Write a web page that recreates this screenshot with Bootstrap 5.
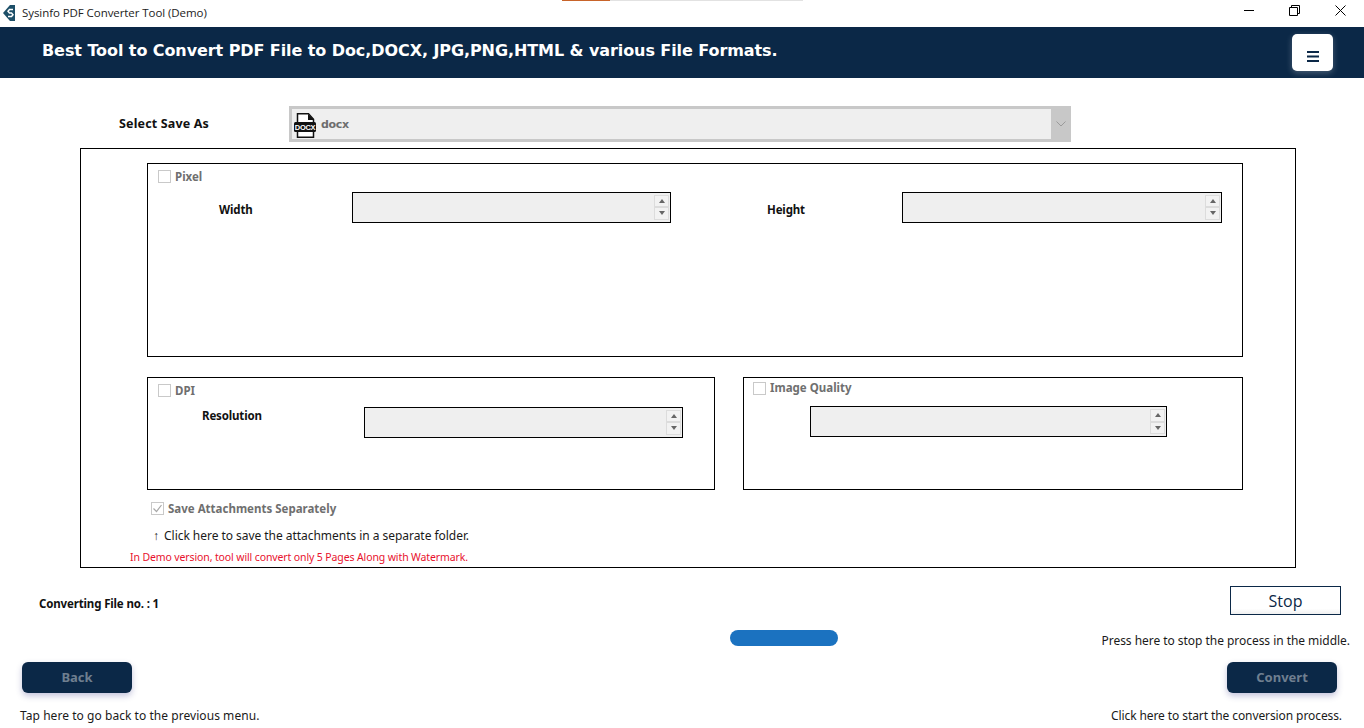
<!DOCTYPE html>
<html lang="en">
<head>
<meta charset="utf-8">
<title>Sysinfo PDF Converter Tool (Demo)</title>
<link href="https://cdn.jsdelivr.net/npm/bootstrap@5.3.0/dist/css/bootstrap.min.css" rel="stylesheet">
<style>
html,body{margin:0;height:728px;overflow:hidden;background:#fff}
body{font-family:"DejaVu Sans",sans-serif;font-size:12px;color:#000;position:relative}
.win-bar{height:27px;padding:0 0 2px 3px;gap:7px;font-family:"Open Sans",sans-serif;font-size:11.5px;color:#222;letter-spacing:-.07px}
.win-ctrls{gap:30px;padding:0 17px 4px 0;margin-left:auto}
.win-x{margin-left:5px}
.win-r{margin-left:4px}
.tab-hint{position:absolute;top:0;left:562px;height:1px;width:241px;background:linear-gradient(90deg,#c8642a 0 48px,#e2e2e2 48px)}
.head-band{height:51px;background:#0b2847;padding:0 31px 3px 42px}
.head-title{font-size:16px;font-weight:700;color:#fff;letter-spacing:-.08px}
.menu-btn{width:41px;height:37px;background:#fff;border:0;border-radius:5px;padding:0;margin-top:3px;box-shadow:0 2px 6px rgba(255,255,255,.25)}
.save-row{margin-top:28px;height:36px;padding-left:119px}
.lbl-b{font-size:11.5px;font-weight:700;color:#111;font-family:"Noto Sans",sans-serif;letter-spacing:-.15px}
.save-lbl{width:170px;font-size:12.5px;letter-spacing:.15px}
.combo{width:782px;height:36px;background:#c8c8c8;padding:3px 0 3px 3px}
.combo-in{flex:1;background:#efefef;padding:2px 0 0 2px;gap:4px;font-size:11px;font-weight:700;color:#6d6d6d;letter-spacing:-.3px}
.combo-arr{width:20px}
.outer-box{margin:6px 0 0 80px;width:1216px;height:420px;border:1px solid #000;padding:14px 0 0 66px;position:relative}
.grp{border:1px solid #000}
.grp-px{width:1096px;height:194px}
.grp-dpi{width:568px;height:113px}
.grp-q{width:500px;height:113px}
.grp-row{gap:28px;margin-top:20px}
.chk{width:13px;height:13px;border:1px solid #c9c9c9;background:#fff;flex:none}
.chk-lbl{font-size:11.500px;font-weight:700;color:#6f6f6f;gap:4px;font-family:"Noto Sans",sans-serif;line-height:1.1}
.chk-txt{padding-top:2px}
.spin{width:319px;height:31px;border:1px solid #000;background:#efefef;padding:2px 1px 2px 0;flex:none}
.spin-wide{width:320px}
.spin-short{width:357px}
.spin-btns{width:15px;margin-left:auto;gap:0}
.spin-btn{flex:1;background:#f2f2f2;border:1px solid #dcdcdc;font-size:0}
.tri-up{width:0;height:0;border:3.5px solid transparent;border-top:0;border-bottom:4px solid #666}
.tri-dn{width:0;height:0;border:3.5px solid transparent;border-bottom:0;border-top:4px solid #666}
.px-chk{padding:5px 0 0 10px}
.px-row{margin-top:8px}
.w-lbl{margin:5px 0 0 71px;width:133px}
.h-lbl{margin:5px 0 0 96px;width:135px}
.dpi-chk{padding:5px 0 0 10px}
.q-chk{padding:4px 0 0 9px}
.dpi-row{margin-top:9px;padding-left:54px}
.r-lbl{width:162px;align-self:flex-start}
.q-row{margin-top:11px;padding-left:66px}
.att-row{position:relative;margin:11px 0 0 4px}
.note{font-family:"Noto Sans",sans-serif;font-size:12px;color:#1a1a1a;letter-spacing:-.04px}
.note-att{margin:11px 0 0 6px}
.note-arr{margin-right:2px}
.note-red{font-size:10.5px;color:#e8112d;margin:5px 0 0 -17px;letter-spacing:-.12px}
.note-tap{letter-spacing:.05px}
.note-go{letter-spacing:-.09px}
.foot-a{height:29px;margin-top:18px;padding:0 23px 0 39px}
.conv-lbl{margin-top:6px}
.stop-btn{width:111px;height:29px;border:1px solid #0b2847;border-radius:0;background:linear-gradient(#fff 80%,#f0f0f0);font-family:"Open Sans",sans-serif;font-size:16px;color:#0b2847;padding:0;line-height:1}
.foot-b{height:16px;margin-top:15px;padding:0 14px 0 730px}
.press-txt{margin-top:5px}
.pill{width:108px;height:16px;border-radius:8px;background:#1b72c0}
.foot-c{margin-top:16px;padding:0 27px 0 22px}
.dk-btn{width:110px;height:31px;background:#0b2847;border:0;border-radius:6px;color:#6f7f90;font-family:"Noto Sans",sans-serif;font-size:13px;font-weight:700;padding:0;box-shadow:0 3px 6px rgba(60,60,140,.3)}
.foot-d{margin-top:14px;padding:0 22px 0 20px}
</style>
</head>
<body>
<div class="tab-hint"></div>

<div class="win-bar d-flex align-items-center">
  <svg width="12" height="16" viewBox="0 0 12 16" aria-hidden="true"><path d="M7 0 0 8l7 8h5V0z" fill="#1d4f68"/><path d="M10 4.500H6.500L5 6.200 6.500 8h2L10 9.800 8.500 11.500H5" fill="none" stroke="#fff" stroke-width="1.500"/></svg>
  <span>Sysinfo PDF Converter Tool (Demo)</span>
  <div class="win-ctrls d-flex align-items-center">
    <svg width="11" height="11" viewBox="0 0 11 11" aria-hidden="true"><path d="M0 5.500h10" stroke="#000" fill="none"/></svg>
    <svg width="11" height="11" viewBox="0 0 11 11" class="win-r" aria-hidden="true"><path d="M.5 2.500h8v8h-8zM2.500 2.500v-2h8v8h-2" stroke="#000" fill="none"/></svg>
    <svg width="12" height="12" viewBox="0 0 12 12" class="win-x" aria-hidden="true"><path d="M.5.500l10 10M10.500.500l-10 10" stroke="#000" fill="none"/></svg>
  </div>
</div>

<header class="head-band d-flex align-items-center justify-content-between">
  <div class="head-title">Best Tool to Convert PDF File to Doc,DOCX, JPG,PNG,HTML &amp; various File Formats.</div>
  <button class="menu-btn d-flex align-items-center justify-content-center" type="button" aria-label="Menu">
    <svg width="12" height="11" viewBox="0 0 12 11" class="mt-2" aria-hidden="true"><path d="M0 1h12M0 5.500h12M0 10h12" stroke="#0b2847" stroke-width="2" fill="none"/></svg>
  </button>
</header>

<div class="save-row d-flex align-items-center">
  <div class="lbl-b save-lbl">Select Save As</div>
  <div class="combo d-flex">
    <div class="combo-in d-flex align-items-center">
      <svg width="23" height="25" viewBox="0 0 23 25" aria-hidden="true"><path d="M3.500.750h11l5 5.500v18h-16z" fill="#fff" stroke="#111" stroke-width="1.500"/><path d="M14 1v6h6z" fill="#111"/><rect x="0" y="9" width="22" height="10" rx="1.500" fill="#111"/><text x="11" y="16.800" text-anchor="middle" font-family="Liberation Sans" font-size="7.500" font-weight="700" fill="#fff">DOCX</text></svg>
      <span>docx</span>
    </div>
    <div class="combo-arr d-flex align-items-center justify-content-center">
      <svg width="10" height="6" viewBox="0 0 10 6" aria-hidden="true"><path d="M.5.500 5 5 9.500.500" stroke="#9a9a9a" fill="none"/></svg>
    </div>
  </div>
</div>

<section class="outer-box">
  <div class="grp grp-px">
    <div class="px-chk d-flex align-items-center chk-lbl"><span class="chk"></span><span class="chk-txt">Pixel</span></div>
    <div class="px-row d-flex align-items-center">
      <div class="lbl-b w-lbl">Width</div>
      <div class="spin d-flex"><div class="spin-btns d-flex flex-column"><div class="spin-btn d-flex align-items-center justify-content-center"><i class="tri-up"></i></div><div class="spin-btn d-flex align-items-center justify-content-center"><i class="tri-dn"></i></div></div></div>
      <div class="lbl-b h-lbl">Height</div>
      <div class="spin spin-wide d-flex"><div class="spin-btns d-flex flex-column"><div class="spin-btn d-flex align-items-center justify-content-center"><i class="tri-up"></i></div><div class="spin-btn d-flex align-items-center justify-content-center"><i class="tri-dn"></i></div></div></div>
    </div>
  </div>

  <div class="grp-row d-flex">
    <div class="grp grp-dpi">
      <div class="dpi-chk d-flex align-items-center chk-lbl"><span class="chk"></span><span class="chk-txt">DPI</span></div>
      <div class="dpi-row d-flex">
        <div class="lbl-b r-lbl">Resolution</div>
        <div class="spin d-flex"><div class="spin-btns d-flex flex-column"><div class="spin-btn d-flex align-items-center justify-content-center"><i class="tri-up"></i></div><div class="spin-btn d-flex align-items-center justify-content-center"><i class="tri-dn"></i></div></div></div>
      </div>
    </div>
    <div class="grp grp-q">
      <div class="q-chk d-flex align-items-center chk-lbl"><span class="chk"></span><span>Image Quality</span></div>
      <div class="q-row d-flex">
        <div class="spin spin-short d-flex"><div class="spin-btns d-flex flex-column"><div class="spin-btn d-flex align-items-center justify-content-center"><i class="tri-up"></i></div><div class="spin-btn d-flex align-items-center justify-content-center"><i class="tri-dn"></i></div></div></div>
      </div>
    </div>
  </div>

  <div class="att-row d-flex align-items-center chk-lbl">
    <span class="chk d-flex align-items-center justify-content-center"><svg width="11" height="11" viewBox="0 0 11 11" aria-hidden="true"><path d="M1.500 5.500 4.500 8.500 9.500 2" stroke="#a8a8a8" stroke-width="1.200" fill="none"/></svg></span>
    <span class="chk-txt">Save Attachments Separately</span>
  </div>
  <div class="note note-att"><span class="note-arr">↑</span> Click here to save the attachments in a separate folder.</div>
  <div class="note note-red">In Demo version, tool will convert only 5 Pages Along with Watermark.</div>
</section>

<div class="foot-a d-flex align-items-center justify-content-between">
  <div class="lbl-b conv-lbl">Converting File no. : 1</div>
  <button class="stop-btn" type="button">Stop</button>
</div>
<div class="foot-b d-flex align-items-center justify-content-between">
  <div class="pill"></div>
  <div class="note press-txt">Press here to stop the process in the middle.</div>
</div>
<div class="foot-c d-flex justify-content-between">
  <button class="dk-btn" type="button">Back</button>
  <button class="dk-btn" type="button">Convert</button>
</div>
<div class="foot-d d-flex justify-content-between">
  <div class="note note-tap">Tap here to go back to the previous menu.</div>
  <div class="note note-go">Click here to start the conversion process.</div>
</div>

<script src="https://cdn.jsdelivr.net/npm/bootstrap@5.3.0/dist/js/bootstrap.bundle.min.js"></script>
</body>
</html>
